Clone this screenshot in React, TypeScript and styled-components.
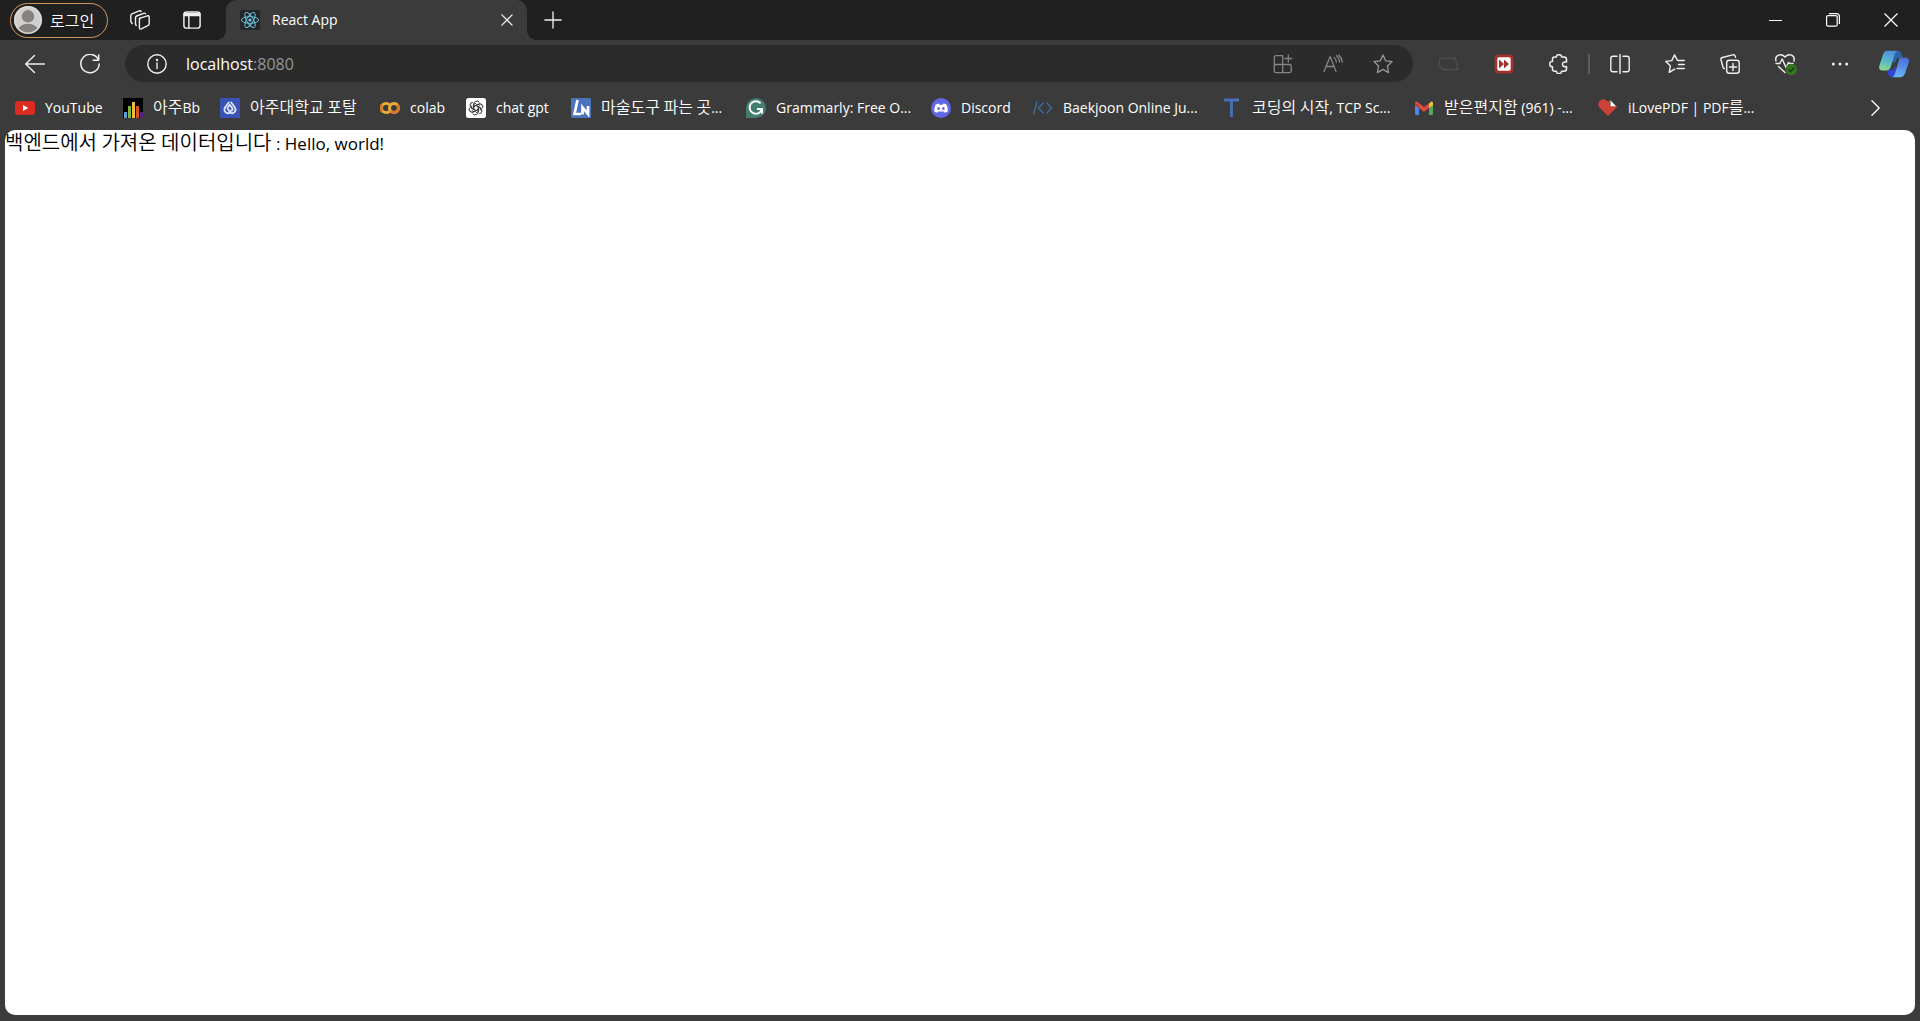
import React from "react";
import styled, { createGlobalStyle } from "styled-components";

const latin = '"Open Sans", "Noto Sans", "Noto Sans CJK KR", sans-serif';
const hangul = '"Noto Sans CJK KR", "Open Sans", sans-serif';

const GlobalStyle = createGlobalStyle`
  *, *::before, *::after { box-sizing: border-box; }
  body { margin: 0; background: #3b3b3b; font-family: ${latin}; }
  button { border: 0; padding: 0; background: none; color: inherit; font: inherit; cursor: pointer; }
  svg { display: block; flex: none; }
`;

const Browser = styled.div`
  display: flex;
  flex-direction: column;
  min-height: 100vh;
  background: #3b3b3b;
  color: #fff;
  font-size: 14px;
`;

const TabStrip = styled.header`
  display: flex;
  align-items: center;
  height: 40px;
  padding-left: 10px;
  background: #202020;
`;

const ProfileButton = styled.button`
  display: flex;
  align-items: center;
  gap: 8px;
  width: 98px;
  height: 35px;
  padding-left: 3px;
  border: 1px solid #d3975f;
  border-radius: 18px;
`;

const IconButton = styled.button<{ $width?: number; $color?: string }>`
  display: flex;
  flex: none;
  align-items: center;
  justify-content: center;
  width: ${(p) => p.$width ?? 55}px;
  height: 36px;
  color: ${(p) => p.$color ?? "#f0f0f0"};
`;

const StripTools = styled.div`
  display: flex;
  padding: 0 8px 0 6px;
`;

const Tab = styled.div`
  position: relative;
  display: flex;
  align-items: center;
  width: 301px;
  height: 40px;
  padding-left: 14px;
  border-radius: 10px 10px 0 0;
  background: #3b3b3b;

  &::before, &::after {
    content: "";
    position: absolute;
    bottom: 0;
    width: 10px;
    height: 10px;
  }
  &::before {
    right: 100%;
    background: radial-gradient(circle at 0 0, transparent 10px, #3b3b3b 10px);
  }
  &::after {
    left: 100%;
    background: radial-gradient(circle at 100% 0, transparent 10px, #3b3b3b 10px);
  }
`;

const TabTitle = styled.span`
  flex: 1;
  padding-left: 12px;
  line-height: 20px;
`;

const WindowControls = styled.div`
  display: flex;
  margin-left: auto;
`;

const Toolbar = styled.nav`
  display: flex;
  align-items: center;
  height: 47px;
  padding-left: 7px;
`;

const AddressBar = styled.div`
  display: flex;
  flex: 1;
  align-items: center;
  height: 37px;
  margin: 0 8px;
  padding: 0 5px 0 3px;
  border-radius: 19px;
  background: #2b2b2b;
  font-size: 16px;
  line-height: 24px;
`;

const HostInput = styled.input`
  field-sizing: content;
  height: 24px;
  margin: 0;
  padding: 0;
  border: 0;
  outline: 0;
  background: none;
  color: #fff;
  font: inherit;
`;

const Port = styled.span`
  flex: 1;
  color: #959595;
`;

const Divider = styled.span`
  width: 2px;
  height: 20px;
  margin: 0 2px;
  background: #5c5c5c;
`;

const BookmarkBar = styled.nav`
  display: flex;
  align-items: center;
  height: 43px;
  padding: 0 0 1px 15px;
`;

const Bookmark = styled.a<{ $width: number }>`
  display: flex;
  flex: none;
  align-items: center;
  gap: 10px;
  width: ${(p) => p.$width}px;
  height: 30px;
  color: #fff;
  text-decoration: none;
  white-space: nowrap;
`;

const Overflow = styled.div`
  margin-left: auto;
  padding-right: 16px;
`;

const Label = styled.span`
  line-height: 20px;
`;

const Korean = styled.span<{ $size?: number }>`
  font-family: ${hangul};
  font-size: ${(p) => p.$size ?? 16}px;
  font-weight: 350;
  line-height: 1;
`;

const Page = styled.main`
  flex: 1;
  margin: 0 5px 6px;
  border-radius: 10px;
  background: #fff;
  color: #000;
  font-size: 17px;
  line-height: 28px;
`;

/* Sets Hangul runs in the Korean face, the rest in the Latin one. */
const Mixed = ({ text, size }: { text: string; size?: number }) => (
  <>
    {text.split(/([\uAC00-\uD7A3]+(?: [\uAC00-\uD7A3]+)*)/).map((run, i) =>
      i % 2 ? <Korean key={i} $size={size}>{run}</Korean> : run
    )}
  </>
);

const Line = ({ size = 20, sw = 1.3, children }: { size?: number; sw?: number; children: React.ReactNode }) => (
  <svg width={size} height={size} viewBox="0 0 20 20" fill="none" stroke="currentColor" strokeWidth={sw} strokeLinecap="round" strokeLinejoin="round" aria-hidden="true">
    {children}
  </svg>
);

const Art = ({ size = 20, children }: { size?: number; children: React.ReactNode }) => (
  <svg width={size} height={size} viewBox="0 0 20 20" aria-hidden="true">{children}</svg>
);

const Avatar = () => (
  <svg width="28" height="28" viewBox="0 0 28 28" aria-hidden="true">
    <defs><clipPath id="face"><circle cx="14" cy="14" r="14" /></clipPath></defs>
    <g clipPath="url(#face)">
      <rect width="28" height="28" fill="#d2d0ce" />
      <circle cx="14" cy="10.3" r="6.2" fill="#858381" />
      <ellipse cx="14" cy="25" rx="10.5" ry="7.2" fill="#858381" />
      <circle cx="14" cy="14" r="13.2" fill="none" stroke="#dedcda" strokeWidth="1.4" />
    </g>
  </svg>
);

const Workspaces = () => (
  <Line sw={1.4}>
    <path d="M9.3 8.3 17.3 5.8q1.9-.5 1.9 1.4v6.6q0 1.5-1.4 1.9l-6.4 3.2q-2 .8-2-1.3V9.8q0-1.1 1-1.5Z" />
    <path d="M6.2 15.6 5.5 14V7.8q0-1.3 1.2-1.8l7-2.7q1.2-.4 1.8.4" />
    <path d="M2.2 13.6.8 11.5V5.7q0-1.3 1.2-1.8L9.2.9q1.2-.4 1.9.6" />
  </Line>
);

const TabActions = () => (
  <Line size={18} sw={1.6}>
    <rect x="1" y="1" width="18" height="18" rx="3" />
    <path d="M1.5 2.5h17V5h-17Z" fill="currentColor" />
    <path d="M6.5 5v14" />
  </Line>
);

const ReactLogo = () => (
  <Art>
    <rect width="20" height="20" rx="2" fill="#222629" />
    <circle cx="10" cy="10" r="1.6" fill="#76c9e4" />
    <g fill="none" stroke="#76c9e4" strokeWidth=".9">
      <ellipse cx="10" cy="10" rx="8.6" ry="3.3" />
      <ellipse cx="10" cy="10" rx="8.6" ry="3.3" transform="rotate(60 10 10)" />
      <ellipse cx="10" cy="10" rx="8.6" ry="3.3" transform="rotate(120 10 10)" />
    </g>
  </Art>
);

const Copilot = () => (
  <svg width="30" height="28" viewBox="0 0 30 28" aria-hidden="true">
    <defs>
      <linearGradient id="cpA" x1=".5" y1="0" x2=".3" y2="1"><stop stopColor="#4c91d9" /><stop offset=".5" stopColor="#5ab4c8" /><stop offset="1" stopColor="#85dc8d" /></linearGradient>
      <linearGradient id="cpB" x1=".6" y1="0" x2=".4" y2="1"><stop stopColor="#4a6ed8" /><stop offset="1" stopColor="#69b5f8" /></linearGradient>
    </defs>
    <path d="M15 1h4q3 0 3.600 3l.8 3.500h-3.200q-2 0-2.700 2L16 13l-4-1Z" fill="#2a64ac" />
    <path d="M8 20h6.500l1-3.500L21 27h-8q-3.500 0-4.300-4Z" fill="#3346d3" />
    <path d="M8.500.8H19q-2.500.7-3.500 4l-3.700 12q-1 3.600-5 3.600H3.500Q-.8 20.400.4 15.500L4.200 4Q5.400.8 8.500.8Z" fill="url(#cpA)" />
    <path d="M20.500 7.500h6q4.300.3 3.300 4.800L26 23.500q-1.300 3.700-5 3.700h-8q2.200-.7 3-3.700l3-10Z" fill="url(#cpB)" />
  </svg>
);

const YouTube = () => (
  <Art>
    <rect y="3" width="20" height="14" rx="3.500" fill="#dd2c21" />
    <path d="m8 7 5.300 3L8 13Z" fill="#fff" />
  </Art>
);
const Blackboard = () => (
  <Art>
    <rect width="20" height="20" fill="#000" />
    <path d="M1 14h3v6H1Z" fill="#5a9bdc" /><path d="M5 8h3v12H5Z" fill="#80b63f" />
    <path d="M9 4h3v16H9Z" fill="#eebd3b" /><path d="M13 8h3v12h-3Z" fill="#d94f26" /><path d="M17 14h3v6h-3Z" fill="#56227e" />
  </Art>
);
const Ajou = () => (
  <Art>
    <rect width="20" height="20" fill="#3853b5" />
    <g fill="none" stroke="#dce5ff" strokeWidth="1.800" strokeLinecap="round" strokeLinejoin="round">
      <path d="M8.800 4.500 5.300 9q-1.900 3 .2 5.200 2.200 2 4.200.3l1.600-2.200" />
      <path d="m11.200 4.500 3.500 4.700q1.900 2.800-.2 5-2.200 2-4.200.3L7.800 11q-.6-1 .2-2l1.700-2.200 2.700 3.600q.6 1-.2 2" />
    </g>
  </Art>
);
const Colab = () => (
  <Art>
    <g fill="none" strokeWidth="3">
      <path d="M9.300 6.700A4.600 4.600 0 1 0 9.300 13.300" stroke="#edae38" />
      <path d="M2.200 6.900a4.600 4.600 0 0 0 0 6.500" stroke="#d5772d" />
      <circle cx="14" cy="10" r="4.500" stroke="#edae38" />
      <path d="M10.800 13.200A4.500 4.500 0 0 0 17.200 6.800" stroke="#d5772d" />
    </g>
  </Art>
);
const ChatGpt = () => (
  <Art>
    <rect width="20" height="20" rx="2.500" fill="#fff" />
    <g fill="none" stroke="#303030" strokeWidth="1" strokeLinejoin="round">
      {[0, 60, 120, 180, 240, 300].map((a) => (
        <path key={a} d="M7.700 11.300V6.200a3.200 3.200 0 0 1 5.700-1.900M7.700 8.700l4.300-2.500 2.200 1.300" transform={`rotate(${a} 10 10)`} />
      ))}
    </g>
  </Art>
);
const MagicShop = () => (
  <Art>
    <rect width="20" height="20" rx="1" fill="#4a73bd" />
    <path d="M6.500 2 3.500 16H10M11.500 16.500V9.500l5.500 6.500V8" fill="none" stroke="#fff" strokeWidth="2.700" />
  </Art>
);
const Grammarly = () => (
  <Art>
    <path d="M10 0a10 10 0 1 1 0 20H0V10A10 10 0 0 1 10 0Z" fill="#427e70" />
    <path d="M14.600 5.300A6.300 6.300 0 1 0 16 11h-5m5 0v4.800" fill="none" stroke="#fff" strokeWidth="1.900" />
  </Art>
);
const Discord = () => (
  <Art>
    <circle cx="10" cy="10" r="10" fill="#6366e6" />
    <path d="m7.700 5.500.7 1.200h3.200l.7-1.200q1.700.2 3.100 1.100 1.800 3.200 1.300 6.900-1.500 1.100-3.100 1.300l-.8-1.300H7.200l-.8 1.300q-1.700-.2-3.100-1.300-.4-3.800 1.400-6.900 1.300-.8 3-1.100Z" fill="#fff" />
    <ellipse cx="7.600" cy="10.600" rx="1.300" ry="1.500" fill="#6366e6" /><ellipse cx="12.400" cy="10.600" rx="1.300" ry="1.500" fill="#6366e6" />
  </Art>
);
const Baekjoon = () => (
  <Art>
    <path d="M4 3.500.5 16.500M10.500 4.500 5.500 10l5 5.500M13.500 4.500l5 5.500-5 5.500" fill="none" stroke="#426da9" strokeWidth="1.200" />
  </Art>
);
const Tcp = () => (
  <Art><path d="M2 2h15M9.500 2v17" fill="none" stroke="#4671b8" strokeWidth="2.800" /></Art>
);
const Gmail = () => (
  <Art>
    <path d="M1 5v10.500Q1 17 2.500 17H5V8Z" fill="#5283e8" />
    <path d="M19 5v10.500q0 1.500-1.500 1.500H15V8Z" fill="#57a65a" />
    <path d="M15 5.500 17 3.700Q19 3 19 5.300v2L15 10Z" fill="#efbe3b" />
    <path d="M1 5.300Q1 3 3 3.500L10 9l5-3.700V10l-5 3.900L5 10 1 7.200Z" fill="#db4c3d" />
    <path d="M1 5.300 5 8v2L1 7.200Z" fill="#b83d31" />
  </Art>
);
const LovePdf = () => (
  <Art>
    <path d="M10 18 1.500 9.500Q-.8 6.500 1.200 3.400 4.200-.1 8 2l2 1.700L12 2v6h7.200q-.3 1.100-1 1.800Z" fill="#ce4236" />
    <path d="M12.500 2.200 18 8.200h-5.500Z" fill="#fff" />
  </Art>
);

const bookmarks = [
  { name: "YouTube", icon: <YouTube />, width: 108 },
  { name: "아주Bb", icon: <Blackboard />, width: 97 },
  { name: "아주대학교 포탈", icon: <Ajou />, width: 160 },
  { name: "colab", icon: <Colab />, width: 86 },
  { name: "chat gpt", icon: <ChatGpt />, width: 105 },
  { name: "마술도구 파는 곳...", icon: <MagicShop />, width: 175 },
  { name: "Grammarly: Free O...", icon: <Grammarly />, width: 185 },
  { name: "Discord", icon: <Discord />, width: 102 },
  { name: "Baekjoon Online Ju...", icon: <Baekjoon />, width: 189 },
  { name: "코딩의 시작, TCP Sc...", icon: <Tcp />, width: 192 },
  { name: "받은편지함 (961) -...", icon: <Gmail />, width: 184 },
  { name: "iLovePDF | PDF를...", icon: <LovePdf />, width: 160 },
];

export default function App() {
  return (
    <Browser>
      <GlobalStyle />
      <TabStrip>
        <ProfileButton>
          <Avatar />
          <Korean>로그인</Korean>
        </ProfileButton>
        <StripTools>
          <IconButton $width={52} aria-label="Workspaces"><Workspaces /></IconButton>
          <IconButton $width={52} aria-label="Tab actions"><TabActions /></IconButton>
        </StripTools>
        <Tab>
          <ReactLogo />
          <TabTitle>React App</TabTitle>
          <IconButton $width={40} aria-label="Close tab">
            <Line size={12} sw={2.2}><path d="m1.500 1.500 17 17m0-17-17 17" /></Line>
          </IconButton>
        </Tab>
        <IconButton $width={52} aria-label="New tab">
          <Line size={18} sw={1.500}><path d="M10 1v18M1 10h18" /></Line>
        </IconButton>
        <WindowControls>
          <IconButton $width={58} aria-label="Minimize">
            <svg width="13" height="13" aria-hidden="true"><path d="M0 6.500h13" stroke="#fff" /></svg>
          </IconButton>
          <IconButton $width={58} aria-label="Restore">
            <svg width="14" height="14" fill="none" stroke="#fff" strokeWidth="1.200" aria-hidden="true">
              <rect x=".6" y="2.600" width="10.600" height="10.600" rx="1.500" /><path d="M3 .6h7.400q3 0 3 3V11" />
            </svg>
          </IconButton>
          <IconButton $width={58} aria-label="Close">
            <svg width="14" height="14" stroke="#fff" strokeWidth="1.200" aria-hidden="true"><path d="m.5.500 13 13m0-13-13 13" /></svg>
          </IconButton>
        </WindowControls>
      </TabStrip>

      <Toolbar>
        <IconButton aria-label="Back">
          <Line sw={1.400}><path d="M19.500 10H.7M9.500 1.500.7 10l8.800 8.500" /></Line>
        </IconButton>
        <IconButton aria-label="Refresh">
          <Line sw={1.500}><path d="M18.500 6A9.200 9.200 0 1 0 19.200 10M18.700 1v5.200h-5.500" /></Line>
        </IconButton>
        <AddressBar>
          <IconButton $width={58} aria-label="Site information">
            <Line sw={1.400}><circle cx="10" cy="10" r="9.200" /><path d="M10 9v5.500" /><circle cx="10" cy="6" r=".5" fill="currentColor" /></Line>
          </IconButton>
          <HostInput aria-label="Address" defaultValue="localhost" />
          <Port>:8080</Port>
          <IconButton $width={50} $color="#858585" aria-label="Install app">
            <Line>
              <path d="M9.300 1.700H3Q1.300 1.700 1.300 3.300V17q0 1.700 1.700 1.700h13.500q1.700 0 1.700-1.700v-4.800q0-1.700-1.700-1.700H1.500M9.700 1.700v17M15.300 1v7M11.800 4.500h7" />
            </Line>
          </IconButton>
          <IconButton $width={50} $color="#858585" aria-label="Read aloud">
            <Line><path d="M1 17.500 7.200 2.500 13 17.500M3 12.500h8M11 3.500q2.200 1.300 2.300 4.500M13.300 1.500q3.100 2.200 3.200 6.500M15.800 1q3 2.600 3.400 7" /></Line>
          </IconButton>
          <IconButton $width={50} $color="#999" aria-label="Add to favorites">
            <Line><path d="m10 1 2.700 5.800 6.400.8-4.700 4.400 1.200 6.600L10 15.400l-5.600 3.200L5.600 12 .9 7.600l6.400-.8Z" /></Line>
          </IconButton>
        </AddressBar>
        <IconButton $color="#4d4d4d" aria-label="Extension">
          <Line><path d="M2 4.500h14.500l2.500 11H4L2 13.500q-1.500-1.500-1.500-3.500V6q0-1.500 1.500-1.500Z" /></Line>
        </IconButton>
        <IconButton aria-label="Playback speed">
          <Art>
            <rect x="1.900" y="1.900" width="16.200" height="16.200" rx="3" fill="#fff" stroke="#a33029" strokeWidth="2.800" />
            <path d="m5 5.500 5 4.500-5 4.500ZM10 5.500l5 4.500-5 4.500Z" fill="#a33029" />
          </Art>
        </IconButton>
        <IconButton aria-label="Extensions">
          <Line sw={1.500}><path d="M3.500 5q0-2 2-2h2q-.3-2.300 2.500-2.300T12.500 3H15q2.500 0 2.500 2.500V8q-4-.5-4 2.300t4 2.300v2.200q0 2.500-2.500 2.500h-2.500q.2 2.200-2.500 2.200t-2.500-2.200h-2q-2 0-2-2v-2.500Q.7 12.800.7 10t2.800-2.500Z" /></Line>
        </IconButton>
        <Divider />
        <IconButton aria-label="Split screen">
          <Line sw={1.400}><path d="M7 2.300H3Q.8 2.300.8 4.500v11q0 2.200 2.200 2.200h4M13 2.300h4q2.200 0 2.200 2.200v11q0 2.200-2.200 2.200h-4M10 .5v19" /></Line>
        </IconButton>
        <IconButton aria-label="Favorites">
          <Line sw={1.400}><path d="M13.500 6.500h5.800M13.500 10.500h5.800M12 14.500h7.300M13.500 6.500l-1-.2L9.500.9 6.800 6.600.8 7.400l4.500 4.400-1 6.600 5.400-3.200" /></Line>
        </IconButton>
        <IconButton aria-label="Collections">
          <Line sw={1.400}>
            <rect x="6.700" y="6.200" width="12.500" height="13" rx="2.500" />
            <path d="M13 9.500v7M9.500 13h7M15.500 3.200l-.3-1q-.6-1.800-2.500-1.300L2.300 3.500Q.5 4 1 5.800l2 7.500q.3 1 1.500 1.300" />
          </Line>
        </IconButton>
        <IconButton aria-label="Browser essentials">
          <svg width="24" height="24" viewBox="-2 -2 24 24" fill="none" stroke="currentColor" strokeWidth="1.400" strokeLinecap="round" strokeLinejoin="round" aria-hidden="true">
            <path d="M1 7Q-.2 2.600 3.500 1.200 7-.2 10 3q3-3.200 6.500-1.800Q20 2.600 19 7M1 9.500h3.800L7.200 5l3.800 8.500 2.500-5 1 1H18M3.500 12.500l6.500 6" />
            <circle cx="16.300" cy="15.500" r="5.700" fill="#347523" stroke="none" />
            <path d="m13.800 15.700 1.800 1.800 3.300-3.500" stroke="#1d3a17" />
          </svg>
        </IconButton>
        <IconButton aria-label="Settings and more">
          <Art><g fill="#eee"><circle cx="3.300" cy="10" r="1.500" /><circle cx="10" cy="10" r="1.500" /><circle cx="16.700" cy="10" r="1.500" /></g></Art>
        </IconButton>
        <IconButton $width={53} aria-label="Copilot"><Copilot /></IconButton>
      </Toolbar>

      <BookmarkBar aria-label="Bookmarks">
        {bookmarks.map((b) => (
          <Bookmark key={b.name} href="#" $width={b.width}>
            {b.icon}
            <Label><Mixed text={b.name} /></Label>
          </Bookmark>
        ))}
        <Overflow>
          <IconButton $width={56} aria-label="More bookmarks">
            <Line size={18} sw={1.700}><path d="m5.500 2 8 8-8 8" /></Line>
          </IconButton>
        </Overflow>
      </BookmarkBar>

      <Page>
        <Mixed text="백엔드에서 가져온 데이터입니다 : Hello, world!" size={20} />
      </Page>
    </Browser>
  );
}
